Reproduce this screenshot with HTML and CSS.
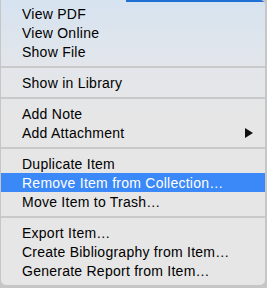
FILE: index.html
```html
<!DOCTYPE html>
<html lang="en">
<head>
    <meta charset="UTF-8">
    <title>Item context menu</title>
    <link rel="stylesheet" href="styles.css">
</head>
<body>
    <div class="context-menu">
        <div class="menu-item">View PDF</div>
        <div class="menu-item">View Online</div>
        <div class="menu-item">Show File</div>
        <div class="menu-separator"></div>
        <div class="menu-item">Show in Library</div>
        <div class="menu-separator"></div>
        <div class="menu-item">Add Note</div>
        <div class="menu-item has-submenu">Add Attachment <span class="submenu-arrow"></span></div>
        <div class="menu-separator"></div>
        <div class="menu-item">Duplicate Item</div>
        <div class="menu-item active">Remove Item from Collection…</div>
        <div class="menu-item">Move Item to Trash…</div>
        <div class="menu-separator"></div>
        <div class="menu-item">Export Item…</div>
        <div class="menu-item">Create Bibliography from Item…</div>
        <div class="menu-item">Generate Report from Item…</div>
    </div>
</body>
</html>
```

FILE: styles.css
```css
/* Page behind the menu */
body {
    margin: 0;
    width: 267px;
    height: 288px;
    overflow: hidden;
    background-color: #c6c6c6;
    font-family: "Liberation Sans", Arial, sans-serif;
}

/* Context menu */
.context-menu {
    margin-left: 1px;
    width: 264px;
    height: 285px;
    box-sizing: border-box;
    padding: 4px 0 5px;
    background:
        linear-gradient(#1f6fd6, #1f6fd6) 125px 0 / 140px 2px no-repeat,
        linear-gradient(#d6e3f0 0, #e3e6ea 70px, #e6e6e6 120px, #e6e6e6 100%);
    border-radius: 0 5px 5px 5px;
    color: #000;
}

.menu-item {
    height: 19px;
    box-sizing: border-box;
    padding: 1px 0 0 21px;
    font-size: 14px;
    letter-spacing: 0.25px;
    display: flex;
    align-items: center;
    white-space: nowrap;
}

.menu-item.active {
    background-color: #3b88f8;
    color: white;
}

.has-submenu {
    justify-content: space-between;
    padding-right: 12px;
}

.submenu-arrow {
    width: 0;
    height: 0;
    border-top: 5px solid transparent;
    border-bottom: 5px solid transparent;
    border-left: 8px solid #111;
}

.menu-separator {
    height: 2px;
    margin: 5px 0;
    background-color: #c9c9c9;
}
```
